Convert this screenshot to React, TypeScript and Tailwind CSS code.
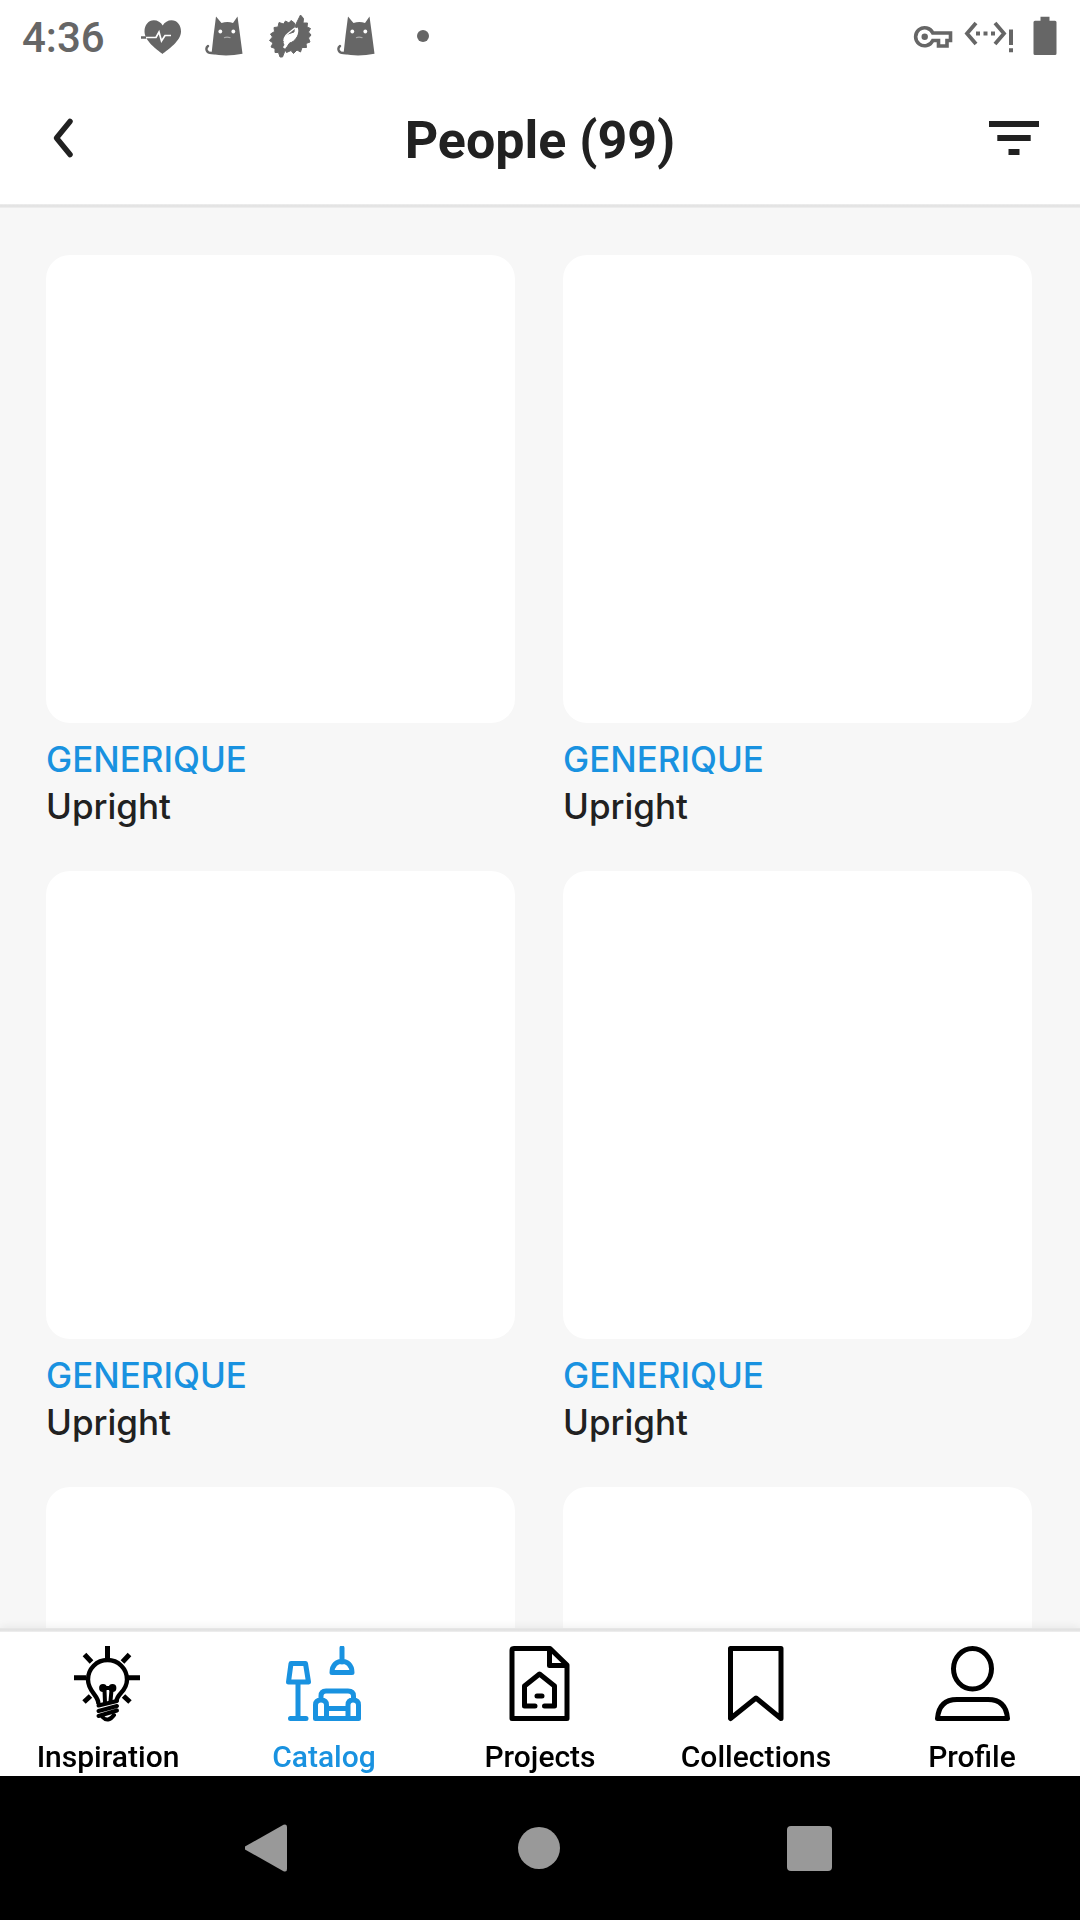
import React from "react";

const blue = "text-[#1992e0]";

function HeartIcon() {
  return (
    <svg width="40" height="36" viewBox="140 17 40 36" fill="none" aria-hidden="true">
      <path
        d="M161.500 53C156 48.500 143.500 40 143.500 30.500C143.500 24 147.500 19.300 152.800 19.300C156.500 19.300 160 21.300 161.700 24.500C163.500 21.300 167 19.300 170.500 19.300C176 19.300 180 24 180 30.500C180 40 167 48.500 161.500 53Z"
        fill="#666"
      />
      <path d="M144 36.500H155L158 31L160.500 40L164 34.500H170" stroke="#fff" strokeWidth="1.700" />
      <path d="M140 36.500H145" stroke="#666" strokeWidth="2.500" />
    </svg>
  );
}

function CatIcon() {
  return (
    <svg width="38" height="40" viewBox="204.500 15.500 38 40" fill="none" aria-hidden="true">
      <path
        d="M215.500 16L221 22.500Q227 20.500 232.500 22.500L237 16Q239.500 34 242 53.200Q226 56.500 211 53.500Q213 34 215.500 16Z"
        fill="#666"
      />
      <path d="M207.500 45.500C204.500 48 206 52.500 211 52.500L214 52.500" stroke="#666" strokeWidth="2.400" strokeLinecap="round" />
      <circle cx="219.800" cy="31" r="1.900" fill="#fff" />
      <circle cx="232.800" cy="31" r="1.900" fill="#fff" />
      <path d="M223.500 37.300Q226.500 36 230 37.300" stroke="#aaa" strokeWidth="1.200" />
    </svg>
  );
}

function GearIcon() {
  return (
    <svg width="46" height="46" viewBox="269 13 46 46" fill="none" strokeLinejoin="round" aria-hidden="true">
      <path
        d="M296.500 23L293 20.500L291 23L287.500 21L285.500 24L281 22.500L280 27L276 27.500L276.500 31.500L272.500 34L274.500 37L271.500 40.500L275 43L273 47L277 48.500L277 52.500L280.500 52.500L282 57L284.500 57L288 48L285 43C285 39 287 36 290 34L296 32Z"
        fill="#666"
        stroke="#666"
      />
      <path
        d="M302.500 15L305.500 18.500L305 23L309.500 23L309 27L312.500 28.500L310.500 32L313 35L310.500 38L312 42L308 43.500L308.500 47.500L304 47.500L302.500 52L299 50L295.500 53.500L293 50.500L288.500 52.500L287 49.500L291.500 43C297 42 301.500 35 299.500 30L297 26Z"
        fill="#666"
        stroke="#666"
      />
      <path d="M298.500 28C300.500 34 296 39.500 290.500 41L286 48" stroke="#fff" strokeWidth="2.600" />
      <path d="M297 28C291 33 286 35 286 41" stroke="#fff" strokeWidth="1.500" />
    </svg>
  );
}

function KeyIcon() {
  return (
    <svg width="38" height="22" viewBox="914 25 38 22" fill="none" className="overflow-visible" aria-hidden="true">
      <path
        d="M932.800 33A9 9 0 1 0 932.800 40.500H938.500V46H947V40.500H950.500V33Z"
        stroke="#666"
        strokeWidth="3.600"
      />
      <circle cx="924.700" cy="36.700" r="3.200" fill="#666" />
    </svg>
  );
}

function NetworkIcon() {
  return (
    <svg width="49" height="32" viewBox="963 23 49 32" fill="none" className="overflow-visible" aria-hidden="true">
      <path d="M975 26L966 36.500L975 47M994 26L1003 36.500L994 47" stroke="#666" strokeWidth="3.800" />
      <path d="M975 34.500h4v4h-4zM982.500 34.500h4v4h-4zM990 34.500h4v4h-4zM1008 32.500h4v15.500h-4zM1008 51.300h4v3.900h-4z" fill="#666" />
    </svg>
  );
}

function BatteryIcon() {
  return (
    <svg width="24" height="40" viewBox="1032.500 15.500 24 40" aria-hidden="true">
      <path d="M1040 16.300h9v4h5.500a1.500 1.500 0 0 1 1.500 1.500v31.200a1.500 1.500 0 0 1-1.500 1.500h-20a1.500 1.500 0 0 1-1.500-1.500v-31.200a1.500 1.500 0 0 1 1.500-1.500h5.500z" fill="#666" />
    </svg>
  );
}

const tabSvg = {
  width: 76,
  height: 76,
  fill: "none",
  stroke: "currentColor",
  strokeWidth: 5,
  "aria-hidden": true,
} as const;

function BulbIcon() {
  return (
    <svg {...tabSvg} viewBox="70 1646 76 76">
      <path d="M107.500 1646V1658M74 1677.800H86M128 1677.800H140M84.500 1654.500L91.500 1662M129.500 1654.500L122.500 1662M84 1702L90.500 1696M130 1702L123.500 1696" />
      <path d="M98.500 1704C98.500 1695 88 1692 88 1679.500A19.500 19.500 0 0 1 127 1679.500C127 1692 117 1693 116.500 1701" strokeWidth="4.400" />
      <g strokeWidth="4" strokeLinecap="round">
        <path d="M98.500 1705.500L117 1701M98.500 1711L117 1706M98.500 1716L117 1710.500" />
        <path d="M102.500 1717Q108 1723 114 1715" />
        <path d="M105 1703L104.500 1690M110.500 1701L111.500 1690M103 1688H113" />
      </g>
      <circle cx="103" cy="1688" r="3.900" fill="currentColor" stroke="none" />
      <circle cx="112.500" cy="1688" r="3.900" fill="currentColor" stroke="none" />
    </svg>
  );
}

function FurnitureIcon() {
  return (
    <svg {...tabSvg} viewBox="286 1646 76 76" strokeLinecap="round" strokeLinejoin="round">
      <path d="M291 1663.500H305.500L308.500 1682H288.500ZM298 1682V1718.500M290.500 1718.500H306" />
      <path d="M342 1648V1662M332 1672.500H352C352 1657.500 332 1657.500 332 1672.500Z" />
      <path d="M321 1699V1696Q321 1691 326 1691H348Q353.500 1691 353.500 1696V1699M326.500 1708.500H348M315.500 1718.500V1705Q315.500 1700 321 1700Q326.500 1700 326.500 1705V1718.500ZM348 1718.500V1705Q348 1700 353 1700Q358.500 1700 358.500 1705V1718.500ZM326.500 1718.500H348" />
    </svg>
  );
}

function ProjectIcon() {
  return (
    <svg {...tabSvg} viewBox="502 1646 76 76" strokeLinejoin="round" strokeLinecap="round">
      <path d="M514 1648.500H550L567 1665V1718.500H512V1650.500Q512 1648.500 514 1648.500ZM549.500 1649V1665.500H566" />
      <path d="M535 1706H524.500V1686L539.500 1674L554.500 1686V1706H544.500M537 1696H542" />
    </svg>
  );
}

function BookmarkIcon() {
  return (
    <svg {...tabSvg} viewBox="718 1646 76 76" strokeLinejoin="round">
      <path d="M730.500 1648.500H781V1718.500L756 1698L730.500 1718.500Z" />
    </svg>
  );
}

function ProfileIcon() {
  return (
    <svg {...tabSvg} viewBox="934 1646 76 76" strokeLinejoin="round">
      <ellipse cx="972.500" cy="1668.800" rx="19" ry="20.300" />
      <path d="M937.500 1718.500Q939 1699.500 957 1699.500H988Q1006 1699.500 1007.500 1718.500Z" />
    </svg>
  );
}

const tabs = [
  { label: "Inspiration", icon: <BulbIcon /> },
  { label: "Catalog", icon: <FurnitureIcon />, active: true },
  { label: "Projects", icon: <ProjectIcon /> },
  { label: "Collections", icon: <BookmarkIcon /> },
  { label: "Profile", icon: <ProfileIcon /> },
];

const products = [
  { id: 1, brand: "GENERIQUE", name: "Upright" },
  { id: 2, brand: "GENERIQUE", name: "Upright" },
  { id: 3, brand: "GENERIQUE", name: "Upright" },
  { id: 4, brand: "GENERIQUE", name: "Upright" },
];

// Ids of the tiles whose details have not been loaded yet.
const pending = [5, 6];

function Tile() {
  return <div className="aspect-[469/468] rounded-3xl bg-white" />;
}

export default function App() {
  return (
    <div className="flex h-screen flex-col overflow-hidden bg-white font-['Roboto',sans-serif] text-[#212121]">
      <div className="flex h-[72px] shrink-0 items-center justify-between pr-[23px] pl-[22px] text-[#666]">
        <div className="flex items-center">
          <span className="pt-1 text-[42px] leading-[68px] font-medium">4:36</span>
          <div className="ml-9 flex items-center gap-6">
            <HeartIcon />
            <CatIcon />
            <GearIcon />
            <CatIcon />
            <span className="ml-[18px] size-3 rounded-full bg-[#666]" />
          </div>
        </div>
        <div className="flex items-center gap-3">
          <KeyIcon />
          <NetworkIcon />
          <span className="ml-2 flex">
            <BatteryIcon />
          </span>
        </div>
      </div>

      <header className="grid h-[132px] shrink-0 grid-cols-[1fr_auto_1fr] items-center px-10">
        <button type="button" aria-label="Back" className="flex size-12 items-center justify-center">
          <svg width="24" height="42" viewBox="0 0 24 42" fill="none" aria-hidden="true">
            <path d="M18 4.500L4.500 21L18 37.500" stroke="#212121" strokeWidth="5.500" strokeLinecap="round" strokeLinejoin="round" />
          </svg>
        </button>
        <h1 className="pt-1.5 text-[52px] leading-[60px] font-bold">People (99)</h1>
        <button type="button" aria-label="Filter" className="flex h-12 w-[52px] items-center justify-center justify-self-end">
          <svg width="50" height="34" viewBox="0 0 50 34" fill="#212121" aria-hidden="true">
            <path d="M0 0h50v6H0zM8.300 14h33.400v6H8.300zM19.500 28h11v6h-11z" />
          </svg>
        </button>
      </header>
      <div className="h-1 shrink-0 bg-linear-to-b from-[#efefef] via-[#e0e0e0] to-[#f0f0f0]" />

      <main className="min-h-0 flex-1 overflow-y-auto bg-[#f7f7f7] pt-[47px] pr-12 pl-[46px] font-['Inter',sans-serif] [scrollbar-width:none]">
        <ul className="grid grid-cols-2 gap-x-12 gap-y-10">
          {products.map((p) => (
            <li key={p.id}>
              <a href="#product" className="block">
                <Tile />
                <div className="pt-[13px] pb-px text-[35px] leading-[47px] font-medium">
                  <p className={blue}>{p.brand}</p>
                  <p>{p.name}</p>
                </div>
              </a>
            </li>
          ))}
          {pending.map((id) => (
            <li key={id} aria-busy="true">
              <Tile />
            </li>
          ))}
        </ul>
      </main>

      <nav className="relative z-10 shrink-0 bg-white shadow-[0_-2px_8px_rgba(0,0,0,0.06)]">
        <div className="h-1 bg-linear-to-b from-[#e8e8e8] via-[#e0e0e0] to-[#f0f0f0]" />
        <ul className="grid h-36 grid-cols-5">
          {tabs.map((t) => (
            <li key={t.label}>
              <a
                href="#tab"
                aria-current={t.active ? "page" : undefined}
                className={`flex flex-col items-center pt-3.5 text-[30px] leading-[34px] font-medium ${t.active ? blue : "text-black"}`}
              >
                {t.icon}
                <span className="pt-[18px]">{t.label}</span>
              </a>
            </li>
          ))}
        </ul>
      </nav>

      <div className="flex h-36 shrink-0 items-center justify-center gap-[222px] bg-black pr-0.5">
        <button type="button" aria-label="System back" className="flex size-12 items-center justify-center">
          <svg width="48" height="48" viewBox="2 0 48 48" aria-hidden="true">
            <path d="M2 22.500L40.500 0.800Q44 -0.500 44 3V45Q44 48.500 40.500 47.200L2 25.500Q0.500 24 2 22.500Z" fill="#999" />
          </svg>
        </button>
        <button type="button" aria-label="Home" className="flex size-12 items-center justify-center">
          <span className="size-[42px] rounded-full bg-[#999]" />
        </button>
        <button type="button" aria-label="Recent apps" className="flex size-12 items-center justify-center">
          <span className="size-[45px] rounded-sm bg-[#999]" />
        </button>
      </div>
    </div>
  );
}
